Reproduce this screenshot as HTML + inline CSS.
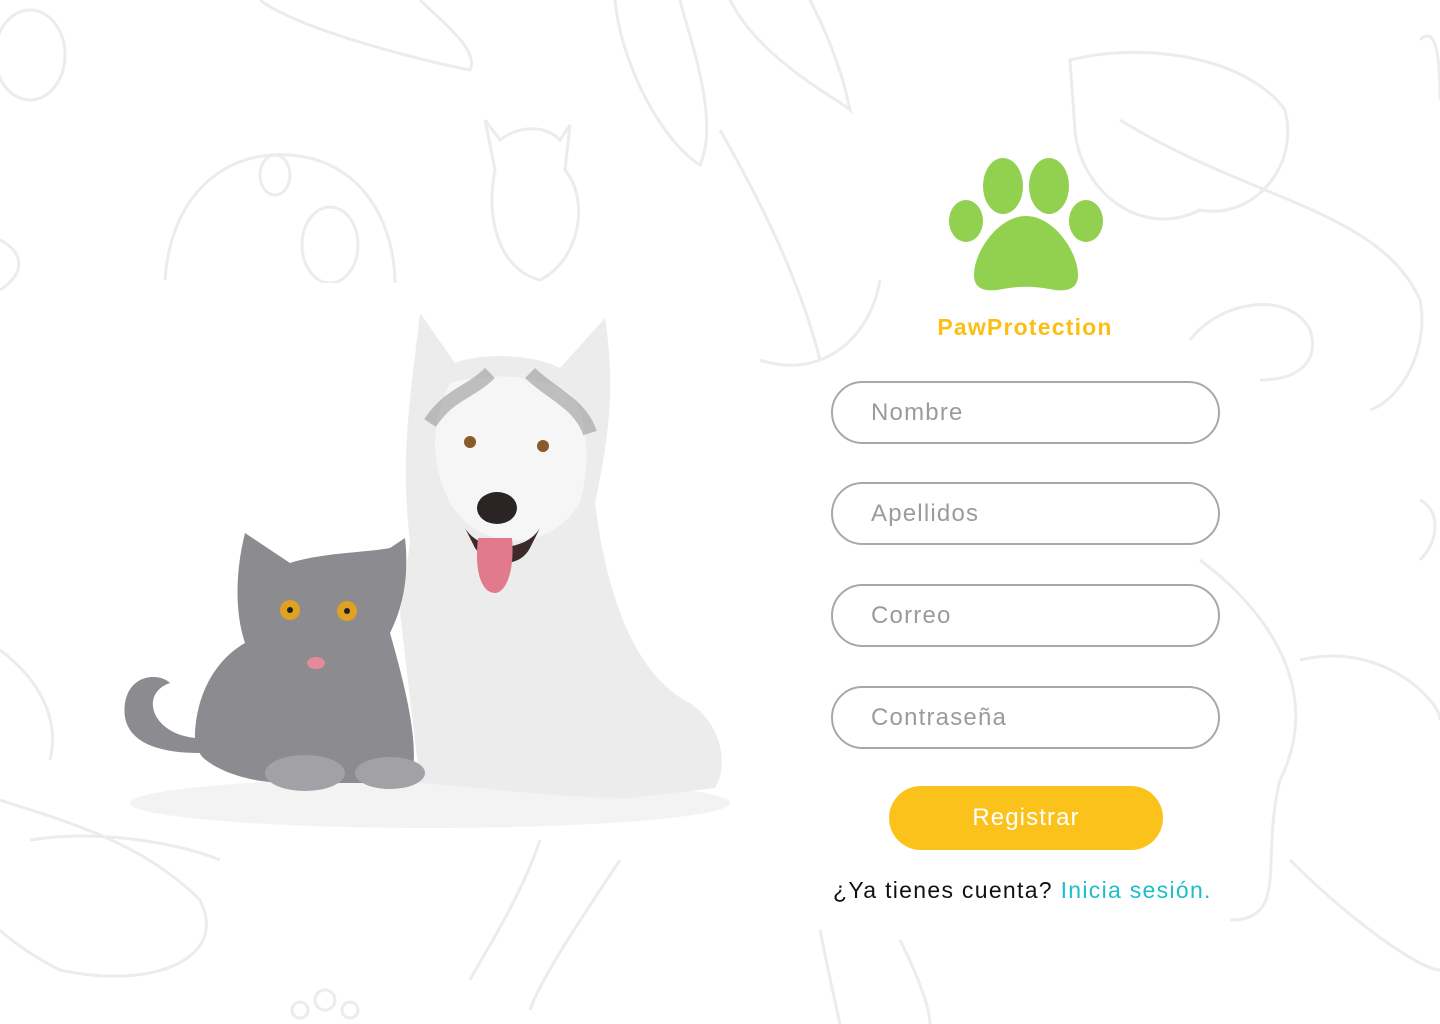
<!DOCTYPE html>
<html><head><meta charset="utf-8"><style>
*{margin:0;padding:0;box-sizing:border-box}
body{width:1440px;height:1024px;background:#fff;position:relative;overflow:hidden;font-family:"Liberation Sans",sans-serif}
.bg{position:absolute;left:0;top:0}
.inp{position:absolute;left:831px;width:389px;height:63px;border:2px solid #a8a8a8;border-radius:32px;background:rgba(255,255,255,.6);font-size:24px;letter-spacing:1.2px;color:#9b9b9b;padding-left:38px;line-height:59px}
.btn{position:absolute;left:889px;top:786px;width:274px;height:64px;border-radius:32px;background:#fbc21b;color:#fff;font-size:24px;letter-spacing:1.1px;text-align:center;line-height:64px}
.title{position:absolute;left:0;width:2050px;top:314px;text-align:center;font-weight:bold;font-size:23px;letter-spacing:1.2px;color:#fbbf14}
.q{position:absolute;left:833px;top:877px;font-size:23px;letter-spacing:1.3px;color:#111;white-space:nowrap}
.q span{color:#1cbfc9}
</style></head><body>
<svg class="bg" width="1440" height="1024" fill="none" stroke="#ececec" stroke-width="3">
<ellipse cx="30" cy="55" rx="35" ry="45"/>
<path d="M260 0 C300 30 420 60 470 70 C480 50 440 20 420 0"/>
<path d="M165 280 C170 200 220 150 290 155 C360 160 395 220 395 285"/>
<ellipse cx="330" cy="245" rx="28" ry="38"/><ellipse cx="275" cy="175" rx="15" ry="20"/>
<path d="M485 120 L500 140 C520 125 545 125 560 140 L570 125 L565 170 C590 200 580 260 540 280 C500 270 485 220 495 170Z"/>
<path d="M615 0 C620 60 660 140 700 165 C720 120 690 40 680 0"/>
<path d="M730 0 C760 60 840 100 850 110 C840 60 820 20 810 0"/>
<path d="M720 130 C760 200 800 280 820 360 M760 360 C820 380 870 340 880 280"/>
<path d="M1070 60 C1150 40 1250 60 1285 110 C1300 170 1250 220 1200 210 C1140 240 1080 190 1075 130Z"/>
<path d="M1120 120 C1250 200 1380 210 1420 300 C1430 350 1400 400 1370 410"/>
<path d="M1190 340 C1220 300 1290 290 1310 330 C1320 360 1300 380 1260 380"/>
<path d="M1420 40 C1440 20 1440 80 1440 100"/>
<path d="M0 650 C40 680 60 720 50 760 M0 800 C60 820 140 840 200 900 C230 960 150 990 60 970 C20 950 0 930 0 930"/>
<path d="M30 840 C90 830 170 840 220 860"/>
<path d="M1200 560 C1280 620 1320 700 1280 780 C1260 860 1290 920 1230 920"/>
<path d="M1300 660 C1380 640 1440 700 1440 720 M1290 860 C1350 920 1420 970 1440 970"/>
<path d="M0 240 C20 250 30 270 0 290 M1420 500 C1440 510 1440 540 1420 560"/>
<path d="M540 840 C520 900 480 960 470 980 M620 860 C580 920 540 980 530 1010"/>
<circle cx="300" cy="1010" r="8"/><circle cx="325" cy="1000" r="10"/><circle cx="350" cy="1010" r="8"/>
<path d="M900 940 C920 980 930 1010 930 1024 M820 930 C830 980 840 1024 840 1024"/>
</svg>
<svg style="position:absolute;left:110px;top:283px" width="630" height="550">
<rect width="630" height="545" fill="#fff"/>
<ellipse cx="320" cy="520" rx="300" ry="25" fill="#f3f3f3"/>
<path d="M300 260 C290 170 300 120 310 30 L345 80 C370 70 420 70 450 85 L495 35 C505 100 500 150 485 220 C495 300 520 390 580 420 C610 440 620 480 605 505 L520 515 C450 515 380 505 310 500 L290 330Z" fill="#ececec"/>
<path d="M340 100 C380 90 420 90 460 110 C480 140 480 180 470 220 C440 270 370 270 340 220 C320 180 320 140 340 100Z" fill="#f6f6f6"/>
<path d="M320 140 C340 110 360 110 380 90 M420 90 C440 110 470 120 480 150" stroke="#9a9a9a" stroke-width="14" fill="none" opacity=".6"/>
<circle cx="360" cy="159" r="6" fill="#8a5a2a"/><circle cx="433" cy="163" r="6" fill="#8a5a2a"/>
<ellipse cx="387" cy="225" rx="20" ry="16" fill="#2a2425"/>
<path d="M355 245 C370 270 415 270 430 245 L420 265 C410 285 380 285 365 265Z" fill="#3a2a2a"/>
<path d="M368 255 L402 255 C405 290 395 310 385 310 C372 310 364 290 368 255Z" fill="#e07a8c"/>
<path d="M135 250 L180 280 C210 270 250 270 280 265 L295 255 C300 300 290 330 280 350 C300 420 310 470 300 500 L180 500 C120 500 90 475 90 470 C40 470 10 455 15 420 C20 390 50 390 60 400 C30 410 40 450 85 455 C85 420 100 380 135 360 C125 330 125 290 135 250Z" fill="#8c8c90"/>
<circle cx="180" cy="327" r="10" fill="#e0a020"/><circle cx="237" cy="328" r="10" fill="#e0a020"/>
<circle cx="180" cy="327" r="3" fill="#222"/><circle cx="237" cy="328" r="3" fill="#222"/>
<ellipse cx="206" cy="380" rx="9" ry="6" fill="#e58a9b"/>
<ellipse cx="195" cy="490" rx="40" ry="18" fill="#a2a2a6"/><ellipse cx="280" cy="490" rx="35" ry="16" fill="#a2a2a6"/>
</svg>
<svg style="position:absolute;left:948px;top:157px" width="158" height="136">
<g fill="#92d050">
<ellipse cx="55" cy="29" rx="20" ry="28"/><ellipse cx="101" cy="29" rx="20" ry="28"/>
<ellipse cx="18" cy="64" rx="17" ry="21"/><ellipse cx="138" cy="64" rx="17" ry="21"/>
<path d="M78 59 C50 59 26 95 26 118 C26 134 40 135 55 132 C70 129 86 129 101 132 C116 135 130 134 130 118 C130 95 106 59 78 59Z"/>
</g></svg>
<div class="title">PawProtection</div>
<div class="inp" style="top:381px">Nombre</div>
<div class="inp" style="top:482px">Apellidos</div>
<div class="inp" style="top:584px">Correo</div>
<div class="inp" style="top:686px">Contraseña</div>
<div class="btn">Registrar</div>
<div class="q">¿Ya tienes cuenta? <span>Inicia sesión.</span></div>
</body></html>
